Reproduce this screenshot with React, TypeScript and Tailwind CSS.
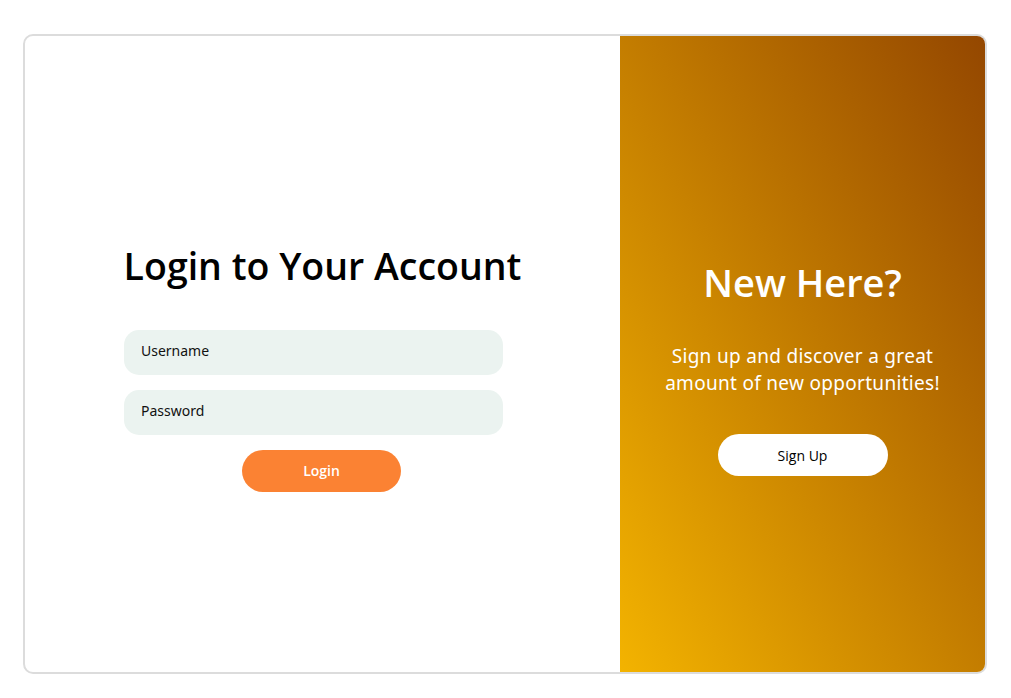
import React from 'react';

const App = () => {
    return (
        <div className="min-h-[698px] w-full bg-white pt-[34px]">
            <div className="ml-[23px] flex h-[640px] w-[964px] overflow-hidden rounded-[10px] border-2 border-[#dcdcdc] bg-white">
                {/* login side */}
                <div className="flex w-[595px] flex-col items-center justify-center pt-[25px]">
                    <h1 className="text-[37.5px] font-semibold leading-[48px] text-black" style={{ fontFamily: '"Open Sans", sans-serif' }}>
                        Login to Your Account
                    </h1>
                    <div className="mr-[18px] mt-[40px] flex w-[379px] flex-col gap-[15px]" style={{ fontFamily: '"Noto Sans", sans-serif' }}>
                        <input
                            placeholder="Username"
                            className="h-[45px] w-full rounded-[15px] bg-[#ebf3f0] px-[17px] pb-[3px] text-[14px] outline-none placeholder:text-[#111]"
                        />
                        <input
                            placeholder="Password"
                            type="password"
                            className="h-[45px] w-full rounded-[15px] bg-[#ebf3f0] px-[17px] pb-[3px] text-[14px] outline-none placeholder:text-[#111]"
                        />
                    </div>
                    <button
                        className="mr-[2px] mt-[15px] h-[42px] w-[159px] rounded-full bg-[#fb8233] text-[14px] font-semibold text-white"
                        style={{ fontFamily: '"Open Sans", sans-serif' }}
                    >
                        Login
                    </button>
                </div>

                {/* sign up side */}
                <div className="flex flex-1 flex-col items-center justify-center bg-[linear-gradient(to_top_right,#f3b300,#944700)] pt-[26px] text-center text-white">
                    <h2 className="text-[38px] font-semibold leading-[48px]" style={{ fontFamily: '"Open Sans", sans-serif' }}>
                        New Here?
                    </h2>
                    <p className="mt-[37px] text-[19px] leading-[27px] tracking-[0.3px]" style={{ fontFamily: '"Noto Sans", sans-serif' }}>
                        Sign up and discover a great<br />amount of new opportunities!
                    </p>
                    <button
                        className="mt-[37px] h-[42px] w-[170px] rounded-full bg-white text-[14px] text-black"
                        style={{ fontFamily: '"Open Sans", sans-serif' }}
                    >
                        Sign Up
                    </button>
                </div>
            </div>
        </div>
    );
};

export default App;
